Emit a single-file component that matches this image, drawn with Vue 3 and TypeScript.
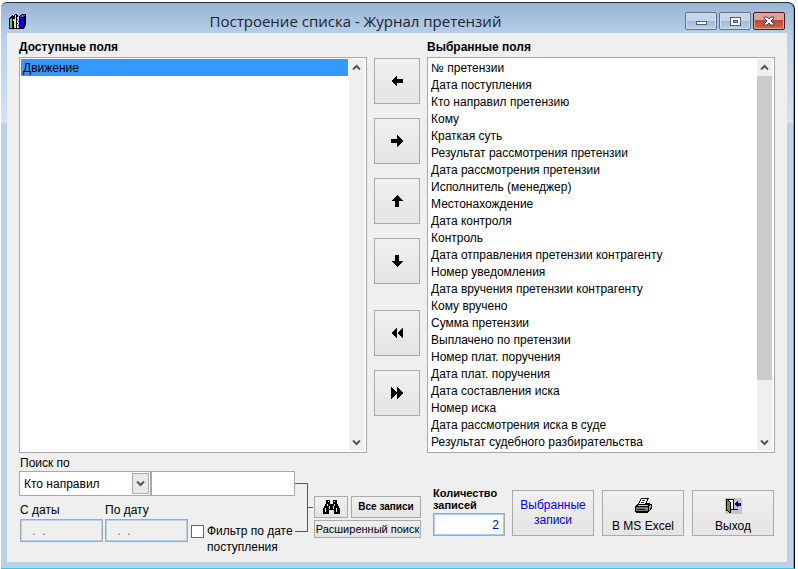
<script setup lang="ts">
import { ref } from 'vue'

interface MoveButton {
  id: string
  label: string
  path: string
}

const available = ref<string[]>(['Движение'])
const chosen = ref<string[]>([
  '№ претензии',
  'Дата поступления',
  'Кто направил претензию',
  'Кому',
  'Краткая суть',
  'Результат рассмотрения претензии',
  'Дата рассмотрения претензии',
  'Исполнитель (менеджер)',
  'Местонахождение',
  'Дата контроля',
  'Контроль',
  'Дата отправления претензии контрагенту',
  'Номер уведомления',
  'Дата вручения претензии контрагенту',
  'Кому вручено',
  'Сумма претензии',
  'Выплачено по претензии',
  'Номер плат. поручения',
  'Дата плат. поручения',
  'Дата составления иска',
  'Номер иска',
  'Дата рассмотрения иска в суде',
  'Результат судебного разбирательства',
])
const selected = ref('Движение')
const searchField = ref('Кто направил')
const query = ref('')
const dateFrom = ref(' .  .')
const dateTo = ref(' .  .')
const byDate = ref(false)
const total = ref('2')

const moves: MoveButton[] = [
  { id: 'left', label: 'Влево', path: 'M0 6 L6 0 V4 H12 V8 H6 V12 Z' },
  { id: 'right', label: 'Вправо', path: 'M12 6 L6 0 V4 H0 V8 H6 V12 Z' },
  { id: 'up', label: 'Вверх', path: 'M6 0 L12 6 H8 V12 H4 V6 H0 Z' },
  { id: 'down', label: 'Вниз', path: 'M6 12 L12 6 H8 V0 H4 V6 H0 Z' },
]
const bulkMoves: MoveButton[] = [
  { id: 'all-left', label: 'Все влево', path: 'M0 6 L6 0 V12 Z M6 6 L12 0 V12 Z' },
  { id: 'all-right', label: 'Все вправо', path: 'M6 6 L0 0 V12 Z M12 6 L6 0 V12 Z' },
]
</script>

<template>
  <main class="window">
    <header class="titlebar">
      <svg class="app-icon" viewBox="0 0 17 17" shape-rendering="crispEdges" aria-hidden="true">
        <path d="M0 5 L4 1 V13 L5 16 H0 Z" fill="#000" />
        <path d="M1 6 L3 4 V15 H1 Z" fill="#22d3e6" />
        <path d="M4 4 L7 0 L9 3 V16 H4 Z" fill="#000" />
        <path d="M4 6 H6 V15 H5 V8 H4 Z M6 2 H7 V15 H6 Z" fill="#f2ee3c" />
        <path d="M7 5 H11 V16 H7 Z" fill="#000" />
        <path d="M8 4 H10 V15 H8 Z" fill="#d9dde0" />
        <path d="M8 6 H9 V7 H8 Z M9 8 H10 V9 H9 Z M8 10 H9 V11 H8 Z M9 12 H10 V13 H9 Z" fill="#222" />
        <path d="M10 4 L12 1 H17 V12 L15 16 H10 Z" fill="#000" />
        <path d="M11 5 H15 V15 H11 Z" fill="#0000e8" />
        <path d="M12 2 H16 L15 4 H11 Z" fill="#55a" />
      </svg>
      <h1>Построение списка - Журнал претензий</h1>
      <div class="caption-buttons">
        <button type="button" aria-label="Свернуть">
          <svg viewBox="0 0 12 10" shape-rendering="crispEdges"><path d="M1 5 H11 V8 H1 Z" fill="#f8f8f8" stroke="#545c6c" /></svg>
        </button>
        <button type="button" aria-label="Развернуть">
          <svg viewBox="0 0 12 10" shape-rendering="crispEdges"><path d="M1 1 H11 V9 H1 Z" fill="#f8f8f8" stroke="#545c6c" /><path d="M4 4 H8 V6 H4 Z" fill="#9ab5d2" stroke="#545c6c" /></svg>
        </button>
        <button type="button" class="close" aria-label="Закрыть">
          <svg viewBox="0 0 12 10"><path d="M1 1 H4 L6 3 L8 1 H11 V2 L8 5 L11 8 V9 H8 L6 7 L4 9 H1 V8 L4 5 L1 2 Z" fill="#f8f8f8" stroke="#4b4658" /></svg>
        </button>
      </div>
    </header>

    <section class="panel">
      <div class="lists">
        <section class="column">
          <h2 id="available-title">Доступные поля</h2>
          <div class="listbox">
            <ul role="listbox" aria-labelledby="available-title" tabindex="0">
              <li v-for="f in available" :key="f" role="option" :aria-selected="f === selected" :class="{ selected: f === selected }" @click="selected = f">{{ f }}</li>
            </ul>
            <div class="scrollbar blank">
              <svg viewBox="0 0 9 7"><path d="M1 5.500 L4.500 2 L8 5.500" /></svg>
              <svg viewBox="0 0 9 7"><path d="M1 1.500 L4.500 5 L8 1.500" /></svg>
            </div>
          </div>
        </section>

        <div class="moves">
          <div class="move-group">
            <button v-for="m in moves" :key="m.id" type="button" class="btn move" :aria-label="m.label">
              <svg viewBox="0 0 12 12" shape-rendering="crispEdges"><path :d="m.path" /></svg>
            </button>
          </div>
          <div class="move-group">
            <button v-for="m in bulkMoves" :key="m.id" type="button" class="btn move" :aria-label="m.label">
              <svg viewBox="0 0 12 12" shape-rendering="crispEdges"><path :d="m.path" /></svg>
            </button>
          </div>
        </div>

        <section class="column">
          <h2 id="chosen-title">Выбранные поля</h2>
          <div class="listbox">
            <ul role="listbox" aria-labelledby="chosen-title" tabindex="0">
              <li v-for="f in chosen" :key="f" role="option" :aria-selected="f === selected" :class="{ selected: f === selected }" @click="selected = f">{{ f }}</li>
            </ul>
            <div class="scrollbar">
              <svg viewBox="0 0 9 7"><path d="M1 5.500 L4.500 2 L8 5.500" /></svg>
              <div class="track"><div class="thumb"></div></div>
              <svg viewBox="0 0 9 7"><path d="M1 1.500 L4.500 5 L8 1.500" /></svg>
            </div>
          </div>
        </section>
      </div>

      <div class="footer">
        <form class="search" @submit.prevent>
          <label for="search-field" class="search-label">Поиск по</label>
          <div class="search-row">
            <div class="combo">
              <select id="search-field" v-model="searchField">
                <option>Кто направил</option>
                <option>Кому</option>
                <option>Номер иска</option>
              </select>
              <span class="drop" aria-hidden="true">
                <svg viewBox="0 0 9 7"><path d="M1 1.500 L4.500 5 L8 1.500" /></svg>
              </span>
            </div>
            <input v-model="query" class="query" type="text" aria-label="Текст поиска" />
          </div>
          <div class="date-row">
            <div class="date">
              <label for="date-from">С даты</label>
              <input id="date-from" v-model="dateFrom" type="text" disabled />
            </div>
            <div class="date">
              <label for="date-to">По дату</label>
              <input id="date-to" v-model="dateTo" type="text" disabled />
            </div>
            <div class="filter">
              <input id="by-date" v-model="byDate" type="checkbox" />
              <label for="by-date">Фильтр по дате<br />поступления</label>
            </div>
          </div>
        </form>

        <div class="bracket" aria-hidden="true"><span class="brace"></span><span class="tick"></span></div>

        <div class="search-actions">
          <button type="button" class="btn find" aria-label="Найти">
            <svg viewBox="0 0 17 15" shape-rendering="crispEdges">
              <path d="M3 0 H7 V4 H10 V0 H14 V4 H15 V6 H16 V8 H17 V14 H11 V10 H6 V14 H0 V8 H1 V6 H2 V4 H3 Z" />
              <path d="M5 1 H6 V2 H5 Z M11 1 H12 V2 H11 Z M4 4 H5 V6 H4 Z M11 4 H12 V6 H11 Z M2 8 H3 V12 H2 Z M6 6 H7 V9 H6 Z M10 6 H11 V9 H10 Z M13 8 H14 V12 H13 Z" fill="#e8e8e8" />
            </svg>
          </button>
          <button type="button" class="btn all">Все записи</button>
          <button type="button" class="btn advanced">Расширенный поиск</button>
        </div>

        <div class="count">
          <label for="total">Количество записей</label>
          <input id="total" v-model="total" type="text" readonly />
        </div>

        <div class="actions">
          <button type="button" class="btn big link">Выбранные записи</button>
          <button type="button" class="btn big pictured">
            <svg viewBox="0 0 17 16" shape-rendering="crispEdges" aria-hidden="true">
              <path d="M6 0 H14 V1 H13 V3 H12 V5 H15 V6 H17 V11 H16 V12 H15 V13 H14 V14 H13 V15 H1 V14 H0 V8 H1 V7 H2 V6 H3 V5 H4 V3 H5 V1 H6 Z" />
              <path d="M6 1 H12 V3 H11 V5 H10 V6 H4 V5 H5 V3 H6 Z" fill="#fff" />
              <path d="M7 2 H10 V3 H7 Z M6 4 H9 V5 H6 Z" fill="#333" />
              <path d="M3 7 H13 V8 H3 Z" fill="#d0d0d0" />
              <path d="M1 9 H13 V13 H1 Z" fill="#777" />
              <path d="M2 11 H10 V12 H2 Z" fill="#222" />
              <path d="M11 10 H12 V11 H11 Z" fill="#e6e040" />
              <path d="M14 8 H15 V12 H14 Z M15 7 H16 V10 H15 Z" fill="#aaa" />
            </svg>
            <span>В MS Excel</span>
          </button>
          <button type="button" class="btn big pictured">
            <svg viewBox="0 0 17 16" shape-rendering="crispEdges" aria-hidden="true">
              <path d="M0 0 H17 V16 H0 Z" fill="#c6c6c6" />
              <path d="M1 1 H9 V11 H13 V12 H6 V13 H1 Z" />
              <path d="M3 2 H8 V11 H3 Z" fill="#fff" />
              <path d="M1 1 H3 V2 H4 V3 H5 V4 H6 V15 H4 V14 H3 V13 H2 V12 H1 Z" />
              <path d="M2 2 H3 V3 H4 V4 H5 V14 H4 V13 H3 V12 H2 Z" fill="#8c8c18" />
              <path d="M10 5 H11 V4 H12 V3 H13 V5 H16 V8 H13 V9 H12 V8 H11 V7 H10 Z" fill="#00009c" />
            </svg>
            <span>Выход</span>
          </button>
        </div>
      </div>
    </section>
  </main>
</template>

<style>
body {
  margin: 0;
  background: #fff;
}
</style>

<style scoped>
.window,
.window * {
  box-sizing: border-box;
}

.window {
  display: flex;
  flex-direction: column;
  min-height: calc(100vh - 2px);
  margin: 2px 3px 0 1px;
  padding: 0 7px 6px 6px;
  border-top: 1px solid #2c3036;
  border-right: 1px solid #000;
  border-bottom: 1px solid #28d0ee;
  border-radius: 6px 7px 0 0;
  box-shadow: inset -1px 0 0 #38c4ea;
  background: linear-gradient(#99b4d2 0, #b6cfe9 30px, #d3e3f4 120px, #b9d1ea 120px);
  color: #000;
  font: 12px/16px "Liberation Sans", Arial, sans-serif;
}

button,
input,
select {
  margin: 0;
  font: inherit;
  color: inherit;
}

.titlebar {
  display: flex;
  align-items: center;
  height: 30px;
  padding: 6px 2px 0;
}

.app-icon {
  width: 17px;
  height: 17px;
}

h1 {
  flex: 1;
  margin: 0;
  text-align: center;
  font: 400 15px/20px "Open Sans", "Noto Sans", sans-serif;
  color: #20242c;
}

.caption-buttons {
  display: flex;
  gap: 2px;
}

.caption-buttons button {
  display: flex;
  align-items: center;
  justify-content: center;
  width: 32px;
  height: 18px;
  padding: 0;
  border: 1px solid #5d7089;
  border-radius: 2px;
  background: linear-gradient(#c3d5e9 50%, #9fb9d5 50%, #b9d1e9);
  box-shadow: inset 0 0 0 1px #cfdff0;
}

.caption-buttons .close {
  border-color: #4a1420;
  background: linear-gradient(#e0a096 45%, #bd4431 45%, #cf6a50);
  box-shadow: inset 0 0 0 1px #e3a79c;
}

.caption-buttons svg {
  width: 12px;
  height: 10px;
}

.panel {
  flex: 1;
  padding: 5px 12px 7px;
  background: #efefef;
}

.lists {
  display: grid;
  grid-template-columns: 1fr 46px 1fr;
  gap: 7px;
}

h2 {
  margin: 0;
  padding-bottom: 1px;
  font: 700 12px/18px "Liberation Sans", Arial, sans-serif;
}

.listbox {
  display: flex;
  height: 396px;
  padding: 1px 2px 1px 1px;
  border: 1px solid #a5a7ab;
  background: #fff;
}

ul {
  flex: 1;
  min-width: 0;
  margin: 0;
  padding: 0;
  overflow: hidden;
  list-style: none;
  outline: none;
}

li {
  height: 17px;
  padding: 0 2px;
  line-height: 18px;
  white-space: nowrap;
}

li.selected {
  background: #3399ff;
  outline: 1px dotted #c87431;
  outline-offset: -1px;
}

.scrollbar {
  display: flex;
  flex-direction: column;
  align-items: center;
  width: 15px;
  margin-left: 1px;
  padding: 5px 0;
  background: #efefef;
}

.scrollbar.blank {
  justify-content: space-between;
}

.scrollbar svg,
.drop svg {
  flex: none;
  width: 9px;
  height: 7px;
  fill: none;
  stroke: #555;
  stroke-width: 2;
}

.track {
  flex: 1;
  width: 100%;
  padding: 5px 0;
}

.thumb {
  height: 85%;
  background: #cbcbcb;
}

.moves {
  display: flex;
  flex-direction: column;
  gap: 26px;
  padding-top: 20px;
}

.move-group {
  display: grid;
  gap: 14px;
}

.btn {
  display: flex;
  align-items: center;
  justify-content: center;
  padding: 0;
  border: 1px solid #aaa;
  background: linear-gradient(#f0f0f0, #e4e4e4);
}

.move {
  height: 46px;
}

.move svg {
  width: 12px;
  height: 12px;
}

.footer {
  display: flex;
  align-items: flex-start;
}

.search {
  flex: 1;
  padding-top: 3px;
}

.search-label {
  display: block;
  padding-left: 1px;
  line-height: 15px;
}

.search-row {
  display: flex;
}

.combo {
  display: grid;
  grid-template-columns: 1fr 17px;
  align-items: center;
  width: 132px;
  height: 25px;
  padding-right: 1px;
  border: 1px solid #a5a7ab;
  background: #fff;
}

.combo select {
  grid-area: 1 / 1 / 2 / 3;
  height: 23px;
  padding: 0 20px 0 4px;
  border: 0;
  background: none;
  appearance: none;
}

.drop {
  grid-area: 1 / 2;
  display: flex;
  align-items: center;
  justify-content: center;
  height: 21px;
  border: 1px solid #aaa;
  background: #e9e9e9;
  pointer-events: none;
}

.query {
  flex: 1;
  width: 0;
  height: 25px;
  padding: 0 4px;
  border: 1px solid #a5a7ab;
  background: #fff;
}

.date-row {
  display: flex;
  align-items: flex-start;
  gap: 2px;
  padding: 6px 0 0 1px;
}

.date label {
  display: block;
  padding-bottom: 1px;
}

.date input {
  display: block;
  width: 83px;
  height: 23px;
  padding: 0 8px;
  border: 1px solid #a5a9b0;
  box-shadow: inset 0 0 0 1px #b4d0ee;
  background: #efefef;
  color: #666;
  white-space: pre;
}

.filter {
  display: flex;
  flex: 1;
  gap: 3px;
  padding: 21px 0 0 1px;
  white-space: nowrap;
}

.filter input {
  flex: none;
  width: 13px;
  height: 13px;
  margin-top: 2px;
  border: 1px solid #666;
  background: #fff;
  appearance: none;
}

.filter input:checked {
  background: #3399ff;
}

.bracket {
  display: flex;
  align-items: center;
  width: 19px;
  padding-top: 30px;
}

.brace {
  width: 13px;
  height: 49px;
  border: 1px solid #555;
  border-left: 0;
}

.tick {
  width: 5px;
  height: 1px;
  background: #555;
}

.search-actions {
  display: grid;
  grid-template-columns: 34px 70px;
  gap: 2px 3px;
  margin: 43px 12px 0 0;
}

.find,
.all {
  height: 22px;
}

.find svg {
  width: 17px;
  height: 15px;
}

.all {
  font-size: 10px;
  font-weight: 700;
}

.advanced {
  grid-column: 1 / 3;
  height: 18px;
  font-size: 11px;
  white-space: nowrap;
}

.count {
  width: 72px;
  margin: 34px 7px 0 0;
}

.count label {
  display: block;
  padding-bottom: 2px;
  font: 700 11px/12px "Liberation Sans", Arial, sans-serif;
}

.count input {
  display: block;
  width: 100%;
  height: 23px;
  padding: 0 5px;
  border: 1px solid #a5a9b0;
  box-shadow: inset 0 0 0 1px #a9cdf2;
  background: #fff;
  color: #00f;
  text-align: right;
}

.actions {
  display: flex;
  gap: 8px;
  padding: 37px 1px 0 0;
}

.big {
  flex-direction: column;
  gap: 4px;
  width: 82px;
  height: 46px;
}

.pictured {
  padding-top: 6px;
}

.big svg {
  width: 17px;
  height: 16px;
}

.link {
  color: #00f;
  line-height: 15px;
}
</style>
